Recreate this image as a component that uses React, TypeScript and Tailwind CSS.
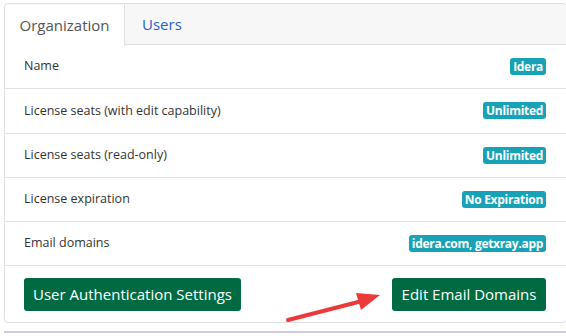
import React from "react";

const rows: { label: string; value: string }[] = [
  { label: "Name", value: "Idera" },
  { label: "License seats (with edit capability)", value: "Unlimited" },
  { label: "License seats (read-only)", value: "Unlimited" },
  { label: "License expiration", value: "No Expiration" },
  { label: "Email domains", value: "idera.com, getxray.app" },
];

export default function App() {
  return (
    <div
      className="relative w-[566px] h-[336px] overflow-hidden bg-white"
      style={{ fontFamily: '"Open Sans", "Noto Sans", sans-serif' }}
    >
      <div className="ml-[4px] pt-[3px]">
        <div className="w-[563px] h-[320px] border border-[#dfdfdf] rounded-[4px] flex flex-col">
          <div className="h-[41px] bg-[#f7f7f7] border-b border-[#dfdfdf] flex rounded-t-[4px]">
            <div className="w-[120px] h-[41px] mt-[1px] bg-white border-r border-[#dfdfdf] rounded-tl-[4px] flex items-center justify-center text-[15px] text-[#555]">
              Organization
            </div>
            <div className="pl-[17px] flex items-center text-[15px] text-[#1f5fd1]">Users</div>
          </div>
          {rows.map((r) => (
            <div
              key={r.label}
              className="h-[44.3px] border-b border-[#e3e3e3] pl-[19px] pr-[20px] flex items-center justify-between"
            >
              <span className="text-[12.5px] text-[#333]">{r.label}</span>
              <span className="bg-[#17a2b8] text-white font-bold text-[12px] leading-[17px] px-[3px] rounded-[3px] tracking-[-0.3px]">
                {r.value}
              </span>
            </div>
          ))}
          <div className="flex-1 pl-[19px] pr-[20px] flex items-center justify-between">
            <button className="h-[33px] w-[217px] bg-[#006b43] text-white text-[15px] rounded-[3px] flex items-center justify-center">
              User Authentication Settings
            </button>
            <button className="h-[33px] w-[154px] bg-[#006b43] text-white text-[15px] rounded-[3px] flex items-center justify-center">
              Edit Email Domains
            </button>
          </div>
        </div>
        <div className="mt-[8px] h-[2px] w-full bg-[#cfc8e6]" />
      </div>
      <svg className="absolute left-0 top-0" width="566" height="336" viewBox="0 0 566 336">
        <line x1="288" y1="320" x2="366" y2="300" stroke="#ec3a3a" strokeWidth="4" strokeLinecap="round" />
        <polygon points="380,295 356,293 361,310" fill="#ec3a3a" />
      </svg>
    </div>
  );
}
